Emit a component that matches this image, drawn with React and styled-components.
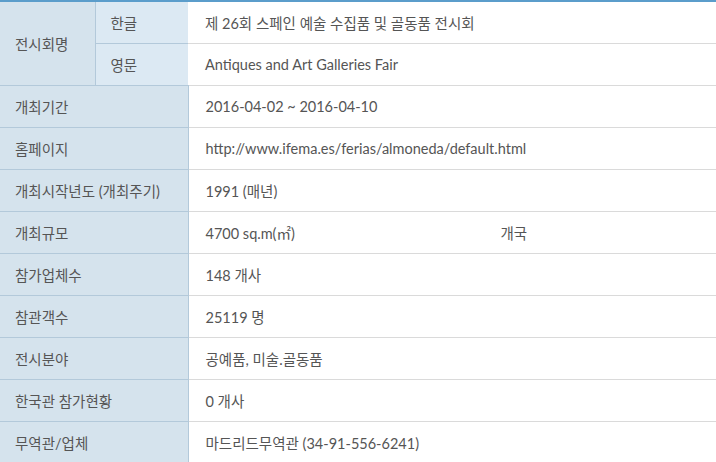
import React from 'react';
import styled, { createGlobalStyle } from 'styled-components';

const GlobalStyle = createGlobalStyle`
    html, body {
        margin: 0;
        padding: 0;
        background: #fff;
    }
    body {
        font-family: "Lato", "Noto Sans CJK KR", sans-serif;
        font-size: 14.5px;
        color: #555;
    }
`;

const InfoTable = styled.table`
    width: 716px;
    border-collapse: collapse;
    border-top: 2px solid #5b9dcb;
    table-layout: fixed;
`;

const Th = styled.th`
    height: 42px;
    padding: 0 0 0 15px;
    text-align: left;
    font-weight: normal;
    color: #555;
    background: ${props => (props.$sub ? '#dce9f3' : '#d5e3ed')};
    border-bottom: 1px solid #b3c9da;
    border-right: ${props => (props.$sub ? '0' : '1px solid #b3c9da')};
    box-sizing: border-box;
    white-space: nowrap;
`;

const Td = styled.td`
    height: 42px;
    padding: 0 0 0 17px;
    color: #555;
    background: #fff;
    border-bottom: 1px solid #dadada;
    box-sizing: border-box;
    white-space: nowrap;
`;

const Gap = styled.span`
    display: inline-block;
    width: ${props => props.$w}px;
`;

const rows = [
    ['개최기간', '2016-04-02 ~ 2016-04-10'],
    ['홈페이지', 'http://www.ifema.es/ferias/almoneda/default.html'],
    ['개최시작년도 (개최주기)', '1991 (매년)'],
    ['개최규모', null],
    ['참가업체수', '148 개사'],
    ['참관객수', '25119 명'],
    ['전시분야', '공예품, 미술.골동품'],
    ['한국관 참가현황', '0 개사'],
    ['무역관/업체', '마드리드무역관 (34-91-556-6241)'],
];

const App = () => {
    return (
        <>
            <GlobalStyle />
            <InfoTable>
                <colgroup>
                    <col style={{ width: '95px' }} />
                    <col style={{ width: '93px' }} />
                    <col />
                </colgroup>
                <tbody>
                    <tr>
                        <Th rowSpan={2}>전시회명</Th>
                        <Th $sub>한글</Th>
                        <Td>제 26회 스페인 예술 수집품 및 골동품 전시회</Td>
                    </tr>
                    <tr>
                        <Th $sub>영문</Th>
                        <Td>Antiques and Art Galleries Fair</Td>
                    </tr>
                    {rows.map(([label, value]) => (
                        <tr key={label}>
                            <Th colSpan={2}>{label}</Th>
                            <Td>
                                {value === null ? (
                                    <>
                                        <Gap $w={295}>4700 sq.m(㎡)</Gap>개국
                                    </>
                                ) : value}
                            </Td>
                        </tr>
                    ))}
                </tbody>
            </InfoTable>
        </>
    );
};

export default App;
